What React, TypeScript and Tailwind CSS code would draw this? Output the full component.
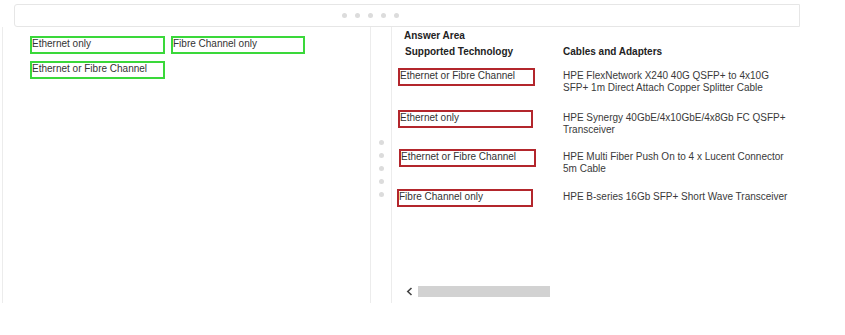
import React from 'react';

const choices = [
  { label: 'Ethernet only', className: 'w-[135px]' },
  { label: 'Fibre Channel only', className: 'w-[134px]' },
  { label: 'Ethernet or Fibre Channel', className: 'w-[135px]' },
];

const rows = [
  {
    tech: 'Ethernet or Fibre Channel',
    cable: ['HPE FlexNetwork X240 40G QSFP+ to 4x10G', 'SFP+ 1m Direct Attach Copper Splitter Cable'],
    h: 'h-[42px]',
    box: 'ml-[-1px] w-[137px]',
  },
  {
    tech: 'Ethernet only',
    cable: ['HPE Synergy 40GbE/4x10GbE/4x8Gb FC QSFP+', 'Transceiver'],
    h: 'h-[39px]',
    box: 'ml-[-1px] w-[135px]',
  },
  {
    tech: 'Ethernet or Fibre Channel',
    cable: ['HPE Multi Fiber Push On to 4 x Lucent Connector', '5m Cable'],
    h: 'h-[40px]',
    box: 'ml-0 w-[137px]',
  },
  {
    tech: 'Fibre Channel only',
    cable: ['HPE B-series 16Gb SFP+ Short Wave Transceiver'],
    h: 'h-[40px]',
    box: 'ml-[-2px] w-[136px]',
  },
];

function Dot() {
  return <span className="block h-[5px] w-[5px] rounded-full bg-[#dcdcdc]" />;
}

export default function App() {
  return (
    <div
      className="h-[335px] w-[845px] overflow-hidden bg-white text-[10px] leading-[12px] text-[#333]"
      style={{ fontFamily: '"Liberation Sans", Arial, sans-serif' }}
    >
      {/* drag handle bar */}
      <div className="ml-[14px] mt-[4px] flex h-[23px] w-[786px] items-center rounded-l-[3px] border border-[#e6e6e6] pl-[327px]">
        <div className="flex gap-[8px]">
          <Dot />
          <Dot />
          <Dot />
          <Dot />
          <Dot />
        </div>
      </div>

      <div className="flex h-[276px]">
        {/* choices pool */}
        <div className="ml-[2px] flex w-[369px] flex-col border-l border-r border-[#ececec] pl-[27px] pt-[9px]">
          <div className="flex gap-[6px]">
            {choices.slice(0, 2).map((c) => (
              <div key={c.label} className={`${c.className} h-[18px] border-2 border-[#3ad83a] leading-[11px]`}>
                {c.label}
              </div>
            ))}
          </div>
          <div className={`${choices[2].className} mt-[7px] h-[18px] border-2 border-[#3ad83a] leading-[11px]`}>
            {choices[2].label}
          </div>
        </div>

        {/* splitter */}
        <div className="flex w-[21px] flex-col items-center justify-center gap-[8px] border-r border-[#ececec] pt-[6px]">
          <Dot />
          <Dot />
          <Dot />
          <Dot />
          <Dot />
        </div>

        {/* answer area */}
        <div className="flex flex-1 flex-col pl-[7px]">
          <div className="ml-[5px] mt-[3px] font-bold text-[#222]">Answer Area</div>
          <div className="mt-[4px] flex font-bold text-[#222]">
            <div className="w-[164px] pl-[6px]">Supported Technology</div>
            <div>Cables and Adapters</div>
          </div>
          <div className="mt-[10px] flex flex-col">
            {rows.map((r, i) => (
              <div key={i} className={`flex ${r.h}`}>
                <div className="w-[164px]">
                  <div className={`${r.box} h-[18px] border-2 border-[#b3262c] leading-[11px]`}>{r.tech}</div>
                </div>
                <div className="pt-[2px] leading-[12px] text-[#3a3a3a]">
                  {r.cable.map((line) => (
                    <div key={line}>{line}</div>
                  ))}
                </div>
              </div>
            ))}
          </div>

          {/* horizontal scroller */}
          <div className="mt-auto mb-[6px] flex items-center gap-[5px] pl-[7px]">
            <svg width="7" height="9" viewBox="0 0 7 9" className="text-[#444]">
              <path d="M5.5 1 L1.8 4.5 L5.5 8" fill="none" stroke="currentColor" strokeWidth="1.6" />
            </svg>
            <div className="h-[11px] w-[132px] bg-[#d2d2d2]" />
          </div>
        </div>
      </div>
    </div>
  );
}
